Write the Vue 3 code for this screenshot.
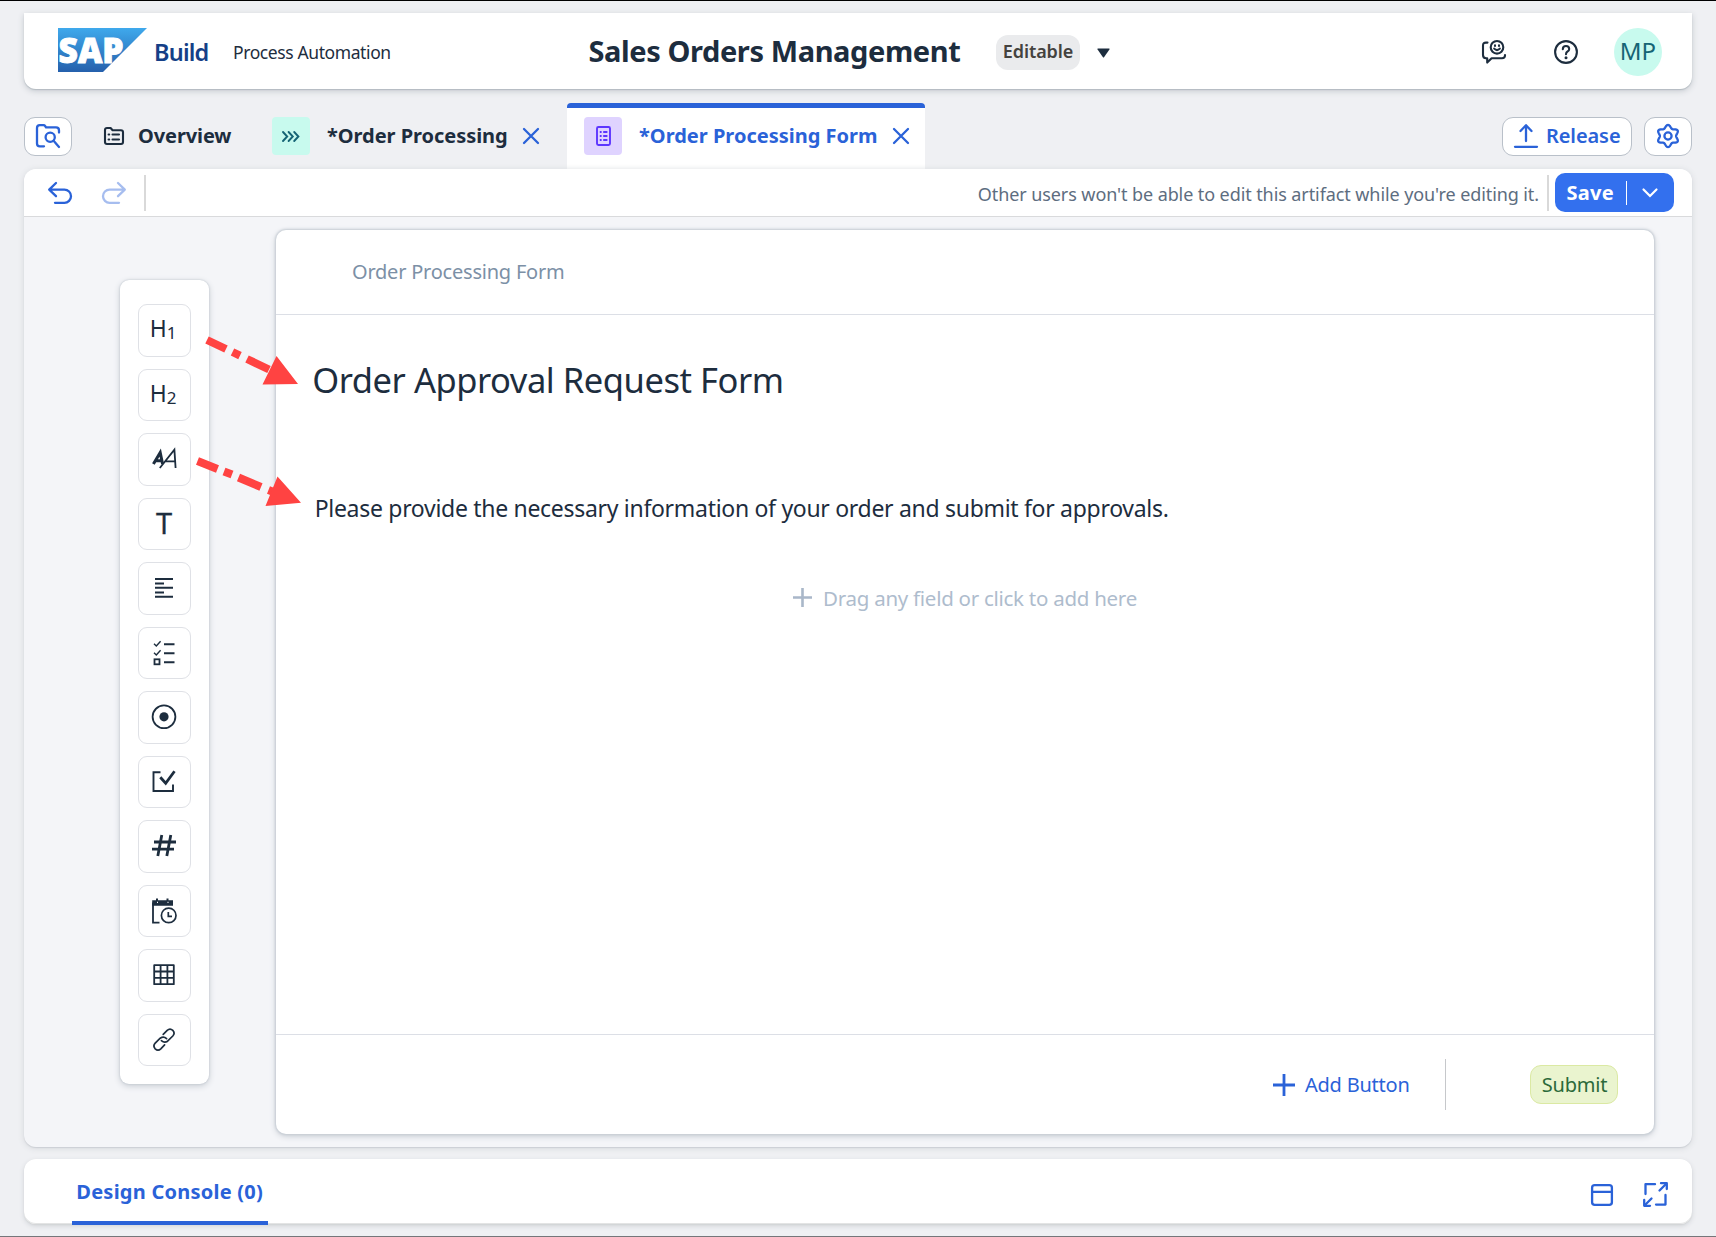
<script setup>
const tools = ['h1', 'h2', 'paragraph', 'text', 'textarea', 'checklist', 'radio', 'checkbox', 'number', 'datetime', 'table', 'link']

// Outline of the settings gear: a circle with six rounded teeth.
const gearPoints = Array.from({ length: 120 }, (_, i) => {
  const a = (i / 120) * Math.PI * 2
  const r = 9.5 + 1.5 * Math.cos(6 * a) + 0.1 * Math.cos(12 * a)
  return `${(12 + r * Math.sin(a)).toFixed(2)},${(12 - r * Math.cos(a)).toFixed(2)}`
}).join(' ')
</script>

<template>
  <div class="app">
    <header class="shell">
      <div class="brand">
        <svg class="logo" width="89" height="44" viewBox="0 0 89 44">
          <defs>
            <linearGradient id="sap" x1="0" y1="0" x2="0" y2="1">
              <stop offset="0" stop-color="#3fa9ec" />
              <stop offset="1" stop-color="#2560ac" />
            </linearGradient>
          </defs>
          <path d="M0 0H89L45 44H0Z" fill="url(#sap)" />
          <text x="0.5" y="35" class="logo-text" textLength="65" lengthAdjust="spacingAndGlyphs">SAP</text>
        </svg>
        <span class="product">Build</span>
        <span class="module">Process Automation</span>
      </div>
      <h1 class="title">Sales Orders Management</h1>
      <span class="badge">Editable</span>
      <svg class="caret" width="13" height="10" viewBox="0 0 13 10"><path d="M1 .5H12Q13 .5 12.4 1.4L7.2 9Q6.5 10 5.8 9L.6 1.4Q0 .5 1 .5Z" fill="#1d2d3e" /></svg>
      <div class="shell-actions">
        <svg width="24" height="24" viewBox="0 0 24 24" class="ink">
          <circle cx="15" cy="7.3" r="6.3" />
          <path d="M12.2 8.6Q15 11.6 17.8 8.6" />
          <path d="M13 5.4V5.9M17 5.4V5.9" />
          <path d="M5.5 2.6H4Q1 2.6 1 5.6V15Q1 18.2 4 18.2H5.2V22.6L9.6 18.2H20Q23 18.2 23 15.6V15" />
        </svg>
        <svg width="24" height="24" viewBox="0 0 24 24" class="ink">
          <circle cx="12" cy="12" r="10.9" />
          <path d="M8.8 9.2Q8.9 6 12 6T15.2 9Q15.2 10.6 13.5 11.5Q12 12.3 12 14.2" />
          <circle cx="12" cy="17.7" r="1.5" fill="#1d2d3e" stroke="none" />
        </svg>
        <span class="avatar">MP</span>
      </div>
    </header>

    <nav class="tabs">
      <button class="outline explorer">
        <svg width="24" height="24" viewBox="0 0 24 24" class="blue">
          <path d="M8 22.3H3.8Q1 22.3 1 19.5V4Q1 1.2 3.8 1.2H7.5Q8.6 1.2 9.2 2.1L10 3.4H20Q23 3.4 23 6.4V8.6" />
          <circle cx="14.2" cy="13.2" r="4.6" /><path d="M17.6 16.8L23 23" />
        </svg>
      </button>
      <div class="tab overview">
        <svg width="20" height="18" viewBox="0 0 20 18" class="ink">
          <path d="M3 1H6.6L8.6 3.2H17Q19 3.2 19 5.2V15Q19 17 17 17H3Q1 17 1 15V3Q1 1 3 1Z" />
          <path d="M8.5 7.5H15M8.5 12.5H15M4.6 7.5H5.2M4.6 12.5H5.2" />
        </svg>
        <span>Overview</span>
      </div>
      <div class="tab process">
        <span class="chip mint">
          <svg width="18" height="11" viewBox="0 0 18 11"><path d="M1 1L5.2 5.5L1 10M6.6 1L10.8 5.5L6.6 10M12.2 1L16.4 5.5L12.2 10" fill="none" stroke="#156475" stroke-width="1.9" stroke-linecap="round" /></svg>
        </span>
        <span class="label">*Order Processing</span>
        <svg width="16" height="16" viewBox="0 0 16 16" class="blue"><path d="M1 1L15 15M15 1L1 15" /></svg>
      </div>
      <div class="tab active">
        <span class="chip violet">
          <svg width="15" height="20" viewBox="0 0 15 20">
            <rect x="1" y="1" width="13" height="18" rx="1.4" fill="none" stroke="#5d36ff" stroke-width="1.9" />
            <path d="M3.8 6H5.6M7.2 6H11.4M3.8 10H5.6M7.2 10H11.4M3.8 14H5.6M7.2 14H11.4" stroke="#5d36ff" stroke-width="1.9" />
          </svg>
        </span>
        <span class="label">*Order Processing Form</span>
        <svg width="16" height="16" viewBox="0 0 16 16" class="blue"><path d="M1 1L15 15M15 1L1 15" /></svg>
      </div>
      <button class="outline release">
        <svg width="24" height="24" viewBox="0 0 24 24" class="blue"><path d="M12 17V1.4M6.5 7L12 1.2L17.5 7M1 22.8H23" /></svg>
        <span>Release</span>
      </button>
      <button class="outline settings">
        <svg width="24" height="24" viewBox="0 0 24 24" class="blue"><polygon :points="gearPoints" /><circle cx="12" cy="12" r="3.6" /></svg>
      </button>
    </nav>

    <main class="editor">
      <div class="toolbar">
        <svg width="24" height="22" viewBox="0 0 24 22" class="blue"><path d="M8 1L1.2 7.6L8 14.2M1.2 7.6H16.4A6.6 6.6 0 0 1 16.4 20.8H7" /></svg>
        <svg width="24" height="22" viewBox="0 0 24 22" class="blue redo"><path d="M16 1L22.8 7.6L16 14.2M22.8 7.6H7.6A6.6 6.6 0 0 0 7.6 20.8H17" /></svg>
        <i class="sep"></i>
        <span class="notice">Other users won't be able to edit this artifact while you're editing it.</span>
        <i class="sep right"></i>
        <button class="save">
          <span>Save</span><i></i>
          <svg width="16" height="10" viewBox="0 0 16 10"><path d="M1.5 1.5L8 8L14.5 1.5" fill="none" stroke="#fff" stroke-width="2.2" stroke-linecap="round" /></svg>
        </button>
      </div>

      <div class="workspace">
        <aside class="palette">
          <div v-for="t in tools" :key="t" class="tool">
            <svg width="32" height="32" viewBox="0 0 32 32">
              <g v-if="t === 'h1' || t === 'h2'" fill="#1d2d3e">
                <text x="1.7" y="22.5" font-size="24" textLength="17" lengthAdjust="spacingAndGlyphs">H</text>
                <text x="18.8" y="25.3" font-size="17">{{ t[1] }}</text>
              </g>
              <g v-else-if="t === 'paragraph'" fill="none" stroke="#1d2d3e">
                <path d="M5.4 21L12.2 9.6L14.6 21M8 17.8H13" stroke-width="3" />
                <path d="M11.8 25L26.4 6.6L27.6 25M16.6 18.4H27" stroke-width="1.8" />
              </g>
              <text v-else-if="t === 'text'" x="16" y="26" font-size="29" text-anchor="middle" fill="#1d2d3e" stroke="#1d2d3e" stroke-width=".3">T</text>
              <path v-else-if="t === 'textarea'" d="M7 7H25M7 11.5H16M7 15.8H25M7 20.5H16M7 24.8H25" stroke="#1d2d3e" stroke-width="2.1" />
              <g v-else-if="t === 'checklist'" fill="none" stroke="#1d2d3e">
                <path d="M16 7.3H26.5M16 16.3H26.5M16 25.3H26.5" stroke-width="2.1" />
                <path d="M6 6.8L8.3 9L12.6 4.2M6 15.8L8.3 18L12.6 13.2" stroke-width="1.4" />
                <rect x="6.5" y="22.3" width="5" height="5" stroke-width="1.8" />
              </g>
              <g v-else-if="t === 'radio'"><circle cx="16" cy="15.8" r="11.4" fill="none" stroke="#1d2d3e" stroke-width="1.8" /><circle cx="16" cy="15.8" r="4.6" fill="#1d2d3e" /></g>
              <g v-else-if="t === 'checkbox'" fill="none" stroke="#1d2d3e">
                <path d="M12.5 6.3H5.5V25H25V18.5" stroke-width="1.9" /><path d="M12.3 11.2L17.7 17.3L26.5 5.2" stroke-width="2.8" />
              </g>
              <path v-else-if="t === 'number'" d="M13.8 5L9.8 26M22.8 5L18.8 26M6 12H28M4 19.2H26" stroke="#1d2d3e" stroke-width="2.8" />
              <g v-else-if="t === 'datetime'" fill="none" stroke="#1d2d3e">
                <path d="M11.5 27.7H5V7.5" stroke-width="1.8" />
                <path d="M4.2 5.2H8V3.6H10V5.2H18.5V3.6H20.5V5.2H25V10.8H4.2Z" fill="#1d2d3e" stroke="none" />
                <path d="M9 7.3H10M19.5 7.3H20.5" stroke="#fff" stroke-width="1.2" />
                <circle cx="20.7" cy="20.4" r="7.3" stroke-width="1.7" /><path d="M20.3 17V21.3H24" stroke-width="1.7" />
              </g>
              <path v-else-if="t === 'table'" d="M6.2 6.2H25.8V25.2H6.2ZM6.2 12.5H25.8M6.2 18.8H25.8M12.6 6.2V25.2M19.4 6.2V25.2" fill="none" stroke="#1d2d3e" stroke-width="1.8" stroke-linejoin="round" />
              <g v-else fill="none" stroke="#1d2d3e" stroke-width="1.7" stroke-linecap="round">
                <path d="M15.2 10.4L19.2 6.4Q22 3.8 24.8 6.4Q27.4 9.2 24.8 12L19.6 17.2Q16.4 19.4 13.4 16.6" />
                <path d="M16.6 20.8L12.8 24.8Q10 27.4 7.2 24.8Q4.6 22 7.2 19.2L12.2 14.2Q15.6 11.8 18.6 14.6" />
              </g>
            </svg>
          </div>
        </aside>

        <section class="form">
          <div class="form-head">Order Processing Form</div>
          <div class="form-body">
            <h2>Order Approval Request Form</h2>
            <p>Please provide the necessary information of your order and submit for approvals.</p>
            <div class="drop">
              <svg width="19" height="19" viewBox="0 0 19 19"><path d="M9.5 0V19M0 9.5H19" stroke="#a9b7c9" stroke-width="2.6" /></svg>
              <span>Drag any field or click to add here</span>
            </div>
          </div>
          <div class="form-foot">
            <svg width="22" height="22" viewBox="0 0 22 22"><path d="M11 0V22M0 11H22" stroke="#2a62d8" stroke-width="2.8" /></svg>
            <span class="add">Add Button</span>
            <i></i>
            <button class="submit">Submit</button>
          </div>
        </section>
      </div>
    </main>

    <footer class="console">
      <div class="console-tab">Design Console (0)</div>
      <svg class="panel blue" width="22" height="22" viewBox="0 0 22 22"><rect x="1.1" y="1.1" width="19.8" height="19.8" rx="2.6" /><path d="M1.5 7.8H20.5" /></svg>
      <svg class="blue" width="25" height="25" viewBox="0 0 25 25">
        <path d="M2.5 12V2.2H12M22.5 13V22.6H13" />
        <path d="M16.5 8.5L23 2M8.5 16.5L2 23" /><path d="M18 1.2H23.8V7M1.2 18V23.8H7" />
      </svg>
    </footer>

    <svg class="arrows" width="110" height="180" viewBox="197 330 110 180">
      <path d="M207 340L226 349M232.5 352L240 355.6M247 359L269 369.5M197.5 461L217.5 469M224 471.5L232 474.6M238.5 477.5L261 487M268.5 490L276 493" stroke="#ff4342" stroke-width="8" />
      <path d="M276.5 356L298 384L262.5 384.5ZM277.5 476.5L301 502.7L265.5 506Z" fill="#ff4342" />
    </svg>
  </div>
</template>

<style>
body { background: #eff0f3; }
</style>

<style scoped>
.app {
  box-sizing: border-box; width: 1716px; height: 1237px; position: relative; overflow: hidden;
  display: flex; flex-direction: column; padding: 12px 24px 0;
  border-top: 1px solid #000; border-bottom: 1px solid #75767a;
  background: #eff0f3; color: #1d2d3e; font-family: "Noto Sans", sans-serif; font-size: 20px; white-space: nowrap;
}
svg { flex: none; display: block; overflow: visible; }
i { display: block; flex: none; }
h1, h2, p { margin: 0; font-weight: 400; }
button { font: inherit; padding: 0; box-sizing: border-box; display: flex; align-items: center; flex: none; }
.ink { fill: none; stroke: #1d2d3e; stroke-width: 2.1; stroke-linecap: round; stroke-linejoin: round; }
.blue { fill: none; stroke: #2a62d8; stroke-width: 2.3; stroke-linecap: round; stroke-linejoin: round; }

.shell { height: 76px; flex: none; box-sizing: border-box; padding-top: 2px; display: flex; align-items: center; background: #fff; border-radius: 0 0 12px 12px; box-shadow: 0 1px 1px #b4bbc1, 0 2px 6px #c3c8ce; }
.brand { width: 564.5px; display: flex; align-items: center; box-sizing: border-box; padding-left: 34px; flex: none; }
.logo { margin-top: -4px; }
.logo-text { font-size: 36px; font-weight: 900; fill: #fff; stroke: #fff; stroke-width: 1; }
.product { font-size: 23.5px; font-weight: 600; letter-spacing: -.8px; color: #153f87; margin-left: 7px; width: 57px; }
.module { font-size: 17.5px; letter-spacing: -.4px; margin-left: 22px; }
.title { font-size: 29px; font-weight: 700; letter-spacing: -.4px; width: 407.5px; line-height: 40px; margin-top: -2px; flex: none; }
.badge { width: 84px; height: 35px; border-radius: 12px; background: #eaebed; color: #44423f; font-size: 18px; font-weight: 600; line-height: 33px; text-align: center; letter-spacing: -.1px; flex: none; }
.caret { margin-left: 17px; margin-top: 1px; }
.shell-actions { margin-left: auto; padding-right: 30px; display: flex; align-items: center; }
.shell-actions svg + svg { margin-left: 48px; }
.avatar { width: 48px; height: 48px; border-radius: 50%; background: #c8faee; color: #156475; font-size: 24px; line-height: 46px; text-align: center; margin-left: 36px; }

.tabs { height: 66px; margin-top: 14px; flex: none; display: flex; align-items: center; font-weight: 700; }
.outline { height: 39px; justify-content: center; background: #fff; border: 1px solid #b9c0c9; border-radius: 11px; color: #2a62d8; }
.explorer { width: 48px; }
.tab { display: flex; align-items: center; flex: none; line-height: 28px; }
.overview { margin-left: 32px; width: 168px; gap: 14px; letter-spacing: -.1px; }
.process { width: 295px; }
.chip { width: 38px; height: 38px; border-radius: 4px; display: flex; align-items: center; justify-content: center; }
.mint { background: #c8faee; }
.violet { background: #dfd3ff; }
.process .label { margin-left: 17px; width: 196px; letter-spacing: -.04px; }
.active { box-sizing: border-box; width: 358px; height: 66px; padding: 0 0 5px 17px; border-top: 5px solid #2a62d8; border-radius: 4px 4px 0 0; background: #fff; color: #2a62d8; }
.active .label { margin-left: 17px; width: 254px; }
.release { width: 130px; margin-left: auto; gap: 8.5px; font-weight: 600; }
.release span { line-height: 28px; letter-spacing: -.1px; }
.settings { width: 48px; margin-left: 12px; }

.editor { height: 978px; flex: none; border-radius: 12px; background: #f4f5f8; box-shadow: 0 1px 1px #cdd0d5, 0 1px 6px #d3d6da; display: flex; flex-direction: column; }
.toolbar { height: 48px; box-sizing: border-box; flex: none; display: flex; align-items: center; padding: 0 18px 0 24px; background: #fff; border-bottom: 1px solid #d9dadc; border-radius: 12px 12px 0 0; }
.redo { margin-left: 30px; opacity: .42; }
.sep { width: 2px; height: 36px; background: #d9d9d9; margin-left: 18px; }
.notice { margin-left: auto; font-size: 18px; letter-spacing: -.09px; color: #5d6d80; margin-top: 3px; }
.sep.right { margin-left: 8px; }
.save { width: 119px; height: 39px; margin-left: 6px; border: 0; border-radius: 10px; background: #3370ee; color: #fff; font-weight: 700; letter-spacing: .3px; padding-left: 11.5px; }
.save span { width: 59.5px; line-height: 28px; text-align: left; }
.save i { width: 1px; height: 24px; background: #fff; }
.save svg { margin-left: 15px; }

.workspace { flex: 1; display: flex; align-items: flex-start; }
.palette { box-sizing: border-box; margin: 63px 0 0 96px; width: 89px; height: 804px; padding: 24px 0 0 18px; background: #fff; border-radius: 9px; box-shadow: 0 0 2px #b9c0c9, 0 2px 6px #c6cbd2; display: flex; flex-direction: column; gap: 12px; flex: none; }
.tool { box-sizing: border-box; width: 53px; height: 52.5px; padding-right: 1px; border: 1px solid #dfe1e6; border-radius: 9px; display: flex; align-items: center; justify-content: center; flex: none; }
.form { box-sizing: border-box; margin: 13px 0 0 67px; width: 1378px; height: 904px; background: #fff; border-radius: 10px; box-shadow: 0 0 2px 1px #c9cfd6, 0 2px 6px #c3c9d0; display: flex; flex-direction: column; flex: none; }
.form-head { box-sizing: border-box; height: 85px; border-bottom: 1px solid #dcdfe6; padding-left: 76px; line-height: 84px; color: #7c90a6; letter-spacing: -.22px; }
.form-body { flex: 1; padding-top: 42px; }
.form-body h2 { font-size: 34.5px; line-height: 46px; letter-spacing: -.45px; padding-left: 36.2px; }
.form-body p { margin-top: 90px; font-size: 23px; line-height: 30px; letter-spacing: -.3px; padding-left: 38.7px; }
.drop { margin-top: 61px; height: 28px; display: flex; align-items: center; justify-content: center; gap: 11px; color: #aebccd; font-size: 20.5px; line-height: 30px; letter-spacing: -.27px; }
.drop svg { margin-top: -2px; }
.form-foot { box-sizing: border-box; height: 100px; border-top: 1px solid #dcdfe6; display: flex; align-items: center; justify-content: flex-end; padding-right: 36px; color: #2a62d8; }
.add { margin-left: 10px; width: 140px; letter-spacing: -.23px; }
.form-foot i { width: 1px; height: 51px; background: #c6c8cb; }
.submit { width: 88px; height: 39px; margin-left: 84px; justify-content: center; background: #eaf4cf; border: 1px solid #dbe9a3; border-radius: 11px; color: #2c6a3a; letter-spacing: -.2px; padding-left: 1px; }

.console { height: 65px; margin-top: 12px; flex: none; display: flex; align-items: center; padding-right: 24px; background: #fff; border-radius: 12px; box-shadow: inset 0 -1px #e3e4e4, 0 1px 1px #d3d5d7, 0 2px 5px #cfd2d6; }
.console-tab { box-sizing: border-box; align-self: flex-start; height: 66px; width: 196px; margin-left: 48px; padding-left: 4.3px; border-bottom: 4px solid #2a62d8; border-radius: 3px 3px 0 0; line-height: 66px; color: #2a62d8; font-weight: 700; letter-spacing: .24px; }
.panel { margin-left: auto; margin-right: 30px; }
.console svg { margin-top: 6px; }
.arrows { position: absolute; left: 197px; top: 329px; }
</style>
